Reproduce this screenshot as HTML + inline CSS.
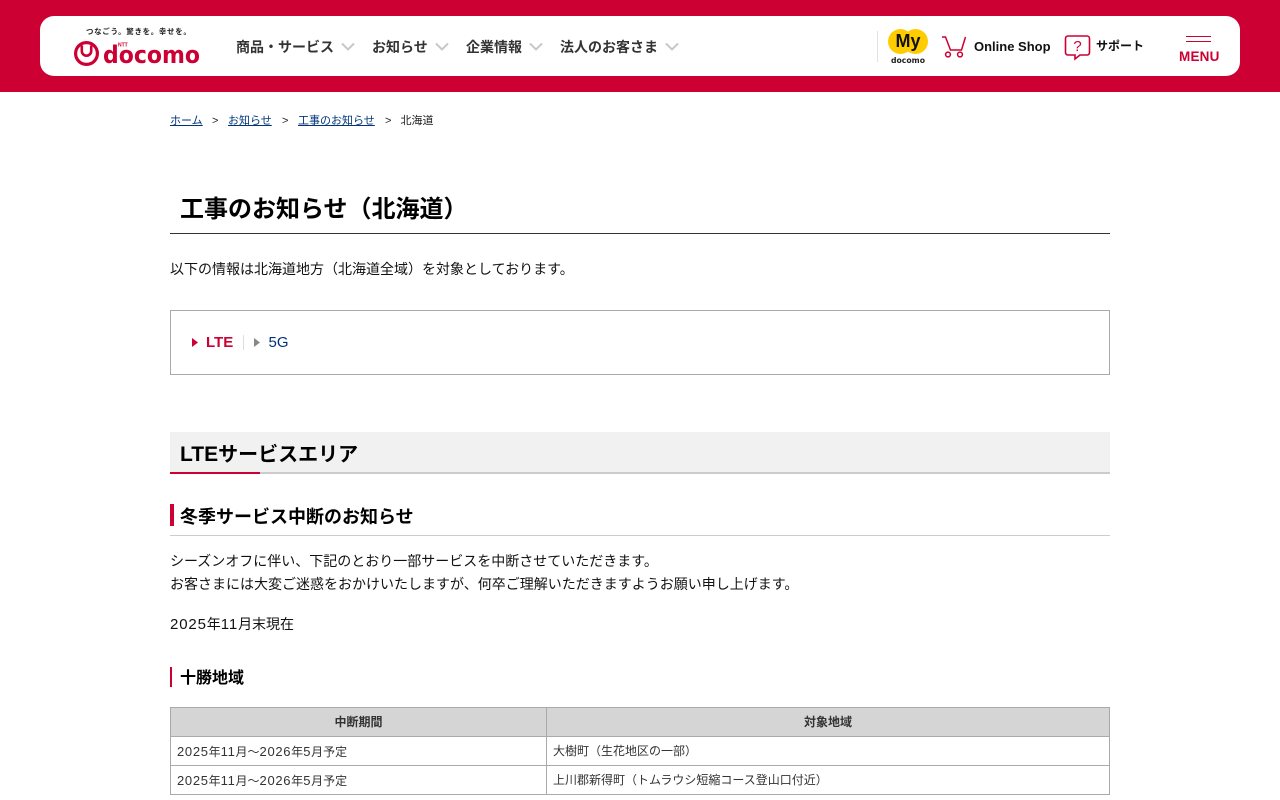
<!DOCTYPE html>
<html lang="ja">
<head>
<meta charset="utf-8">
<title>工事のお知らせ（北海道）</title>
<style>
html,body{margin:0;padding:0;background:#fff;}
body{width:1280px;height:800px;overflow:hidden;position:relative;font-family:"Liberation Sans","Noto Sans CJK JP",sans-serif;color:#000;}
.a{position:absolute;white-space:nowrap;}
a{color:#003478;}
.nav{font-size:14px;font-weight:700;color:#333;line-height:20px;top:37px;}
.bc{font-size:11px;line-height:16px;top:113px;color:#222;}
.t{font-size:14px;line-height:23px;color:#111;}
.cell{position:absolute;box-sizing:border-box;border:1px solid #aaa;font-size:12px;color:#333;line-height:29px;padding-left:6px;white-space:nowrap;}
.th{background:#d5d5d5;font-weight:700;text-align:center;padding:0;}
.n14{font-size:15px;letter-spacing:.85px;}
.n12{font-size:13px;letter-spacing:.68px;}
</style>
</head>
<body>
<div class="a" style="left:0;top:0;width:1280px;height:92px;background:#cc0033;"></div>
<div class="a" style="left:40px;top:16px;width:1200px;height:60px;background:#fff;border-radius:14px;"></div>

<div class="a" style="left:86px;top:26px;font-size:7.500px;line-height:12px;font-weight:700;color:#222;letter-spacing:.65px;">つなごう。驚きを。幸せを。</div>
<svg class="a" style="left:70px;top:36px;" width="135" height="34" viewBox="0 0 135 34">
<circle cx="16.500" cy="17.500" r="10.900" fill="none" stroke="#cc0033" stroke-width="3.200"/>
<path d="M11.800 9.500v5.500a4.700 4.700 0 0 0 9.400 0v-5.500" fill="none" stroke="#cc0033" stroke-width="2.600"/>
<text x="33" y="27" font-family="DejaVu Sans" font-size="24" font-weight="700" fill="#cc0033" textLength="97" lengthAdjust="spacingAndGlyphs">docomo</text>
<text x="48" y="10.500" font-family="Liberation Sans" font-size="5" font-weight="700" fill="#cc0033">NTT</text>
</svg>

<div class="a nav" style="left:236px;">商品・サービス</div>
<div class="a nav" style="left:372px;">お知らせ</div>
<div class="a nav" style="left:466px;">企業情報</div>
<div class="a nav" style="left:560px;">法人のお客さま</div>
<svg class="a" style="left:340px;top:42px;" width="16" height="10"><path d="M2 1.500l6 6 6-6" fill="none" stroke="#c8c8c8" stroke-width="2"/></svg>
<svg class="a" style="left:434px;top:42px;" width="16" height="10"><path d="M2 1.500l6 6 6-6" fill="none" stroke="#c8c8c8" stroke-width="2"/></svg>
<svg class="a" style="left:528px;top:42px;" width="16" height="10"><path d="M2 1.500l6 6 6-6" fill="none" stroke="#c8c8c8" stroke-width="2"/></svg>
<svg class="a" style="left:664px;top:42px;" width="16" height="10"><path d="M2 1.500l6 6 6-6" fill="none" stroke="#c8c8c8" stroke-width="2"/></svg>

<div class="a" style="left:877px;top:31px;width:1px;height:31px;background:#e2e2e2;"></div>
<svg class="a" style="left:886px;top:26px;" width="44" height="40" viewBox="0 0 44 40">
<circle cx="14.500" cy="15.500" r="12.500" fill="#ffcc00"/>
<circle cx="29.500" cy="15.500" r="12.500" fill="#ffcc00"/>
<text x="22" y="21" text-anchor="middle" font-family="Liberation Sans" font-size="18" font-weight="700" fill="#111">My</text>
<text x="22" y="37" text-anchor="middle" font-family="DejaVu Sans" font-size="7.500" font-weight="700" fill="#222" textLength="34" lengthAdjust="spacingAndGlyphs">docomo</text>
</svg>
<svg class="a" style="left:940px;top:34px;" width="28" height="26" viewBox="0 0 28 26">
<path d="M2 3h3.500l5 13h11l4-13" fill="none" stroke="#cc0033" stroke-width="1.500"/>
<circle cx="8" cy="20.500" r="2.400" fill="none" stroke="#cc0033" stroke-width="1.500"/>
<circle cx="20" cy="20.500" r="2.400" fill="none" stroke="#cc0033" stroke-width="1.500"/>
</svg>
<div class="a" style="left:974px;top:38px;font-size:13px;font-weight:700;line-height:18px;color:#111;">Online Shop</div>
<svg class="a" style="left:1064px;top:34px;" width="28" height="27" viewBox="0 0 28 27">
<path d="M4 2h19a2.500 2.500 0 0 1 2.500 2.500v14a2.500 2.500 0 0 1-2.500 2.500h-7l-5 4v-4H4a2.500 2.500 0 0 1-2.500-2.500v-14A2.500 2.500 0 0 1 4 2z" fill="none" stroke="#cc0033" stroke-width="1.600"/>
<text x="13.500" y="17" text-anchor="middle" font-family="Liberation Sans" font-size="15" fill="#cc0033">?</text>
</svg>
<div class="a" style="left:1096px;top:37px;font-size:12px;font-weight:700;line-height:18px;color:#111;">サポート</div>
<div class="a" style="left:1186px;top:36px;width:25px;height:1px;background:#cc0033;"></div>
<div class="a" style="left:1186px;top:41px;width:25px;height:1px;background:#cc0033;"></div>
<div class="a" style="left:1179px;top:48px;font-size:13.500px;font-weight:700;line-height:17px;color:#cc0033;letter-spacing:.2px;">MENU</div>

<div class="a bc" style="left:170px;"><a href="#">ホーム</a></div>
<div class="a bc" style="left:212px;">&gt;</div>
<div class="a bc" style="left:228px;"><a href="#">お知らせ</a></div>
<div class="a bc" style="left:282px;">&gt;</div>
<div class="a bc" style="left:298px;"><a href="#">工事のお知らせ</a></div>
<div class="a bc" style="left:385px;">&gt;</div>
<div class="a bc" style="left:400.500px;">北海道</div>

<div class="a" style="left:180px;top:192px;font-size:24px;font-weight:700;line-height:35px;">工事のお知らせ（北海道）</div>
<div class="a" style="left:170px;top:233px;width:940px;height:1px;background:#333;"></div>
<div class="a t" style="left:170px;top:258px;">以下の情報は北海道地方（北海道全域）を対象としております。</div>

<div class="a" style="left:170px;top:310px;width:938px;height:63px;border:1px solid #aaa;"></div>
<svg class="a" style="left:192px;top:338px;" width="7" height="9"><path d="M0 0l6 4.500-6 4.500z" fill="#cc0033"/></svg>
<div class="a" style="left:206px;top:333px;font-size:15px;font-weight:700;line-height:20px;color:#cc0033;">LTE</div>
<div class="a" style="left:243px;top:335px;width:1px;height:15px;background:#ddd;"></div>
<svg class="a" style="left:254px;top:338px;" width="7" height="10"><path d="M0 0l6 4.500-6 4.500z" fill="#888"/></svg>
<div class="a" style="left:268.500px;top:333px;font-size:15px;line-height:20px;color:#003478;">5G</div>

<div class="a" style="left:170px;top:432px;width:940px;height:40px;background:#f1f1f1;"></div>
<div class="a" style="left:170px;top:472px;width:940px;height:2px;background:#ccc;"></div>
<div class="a" style="left:170px;top:472px;width:90px;height:2px;background:#cc0033;"></div>
<div class="a" style="left:180px;top:440px;font-size:20px;font-weight:700;line-height:30px;"><span style="font-size:21px;">LTE</span>サービスエリア</div>

<div class="a" style="left:170px;top:504px;width:4px;height:22px;background:#cc0033;"></div>
<div class="a" style="left:180px;top:504px;font-size:18px;font-weight:700;line-height:27px;">冬季サービス中断のお知らせ</div>
<div class="a" style="left:170px;top:535px;width:940px;height:1px;background:#ccc;"></div>
<div class="a t" style="left:170px;top:550px;">シーズンオフに伴い、下記のとおり一部サービスを中断させていただきます。<br>お客さまには大変ご迷惑をおかけいたしますが、何卒ご理解いただきますようお願い申し上げます。</div>
<div class="a t" style="left:170px;top:613px;"><span class="n14">2025</span>年<span class="n14">11</span>月末現在</div>

<div class="a" style="left:170px;top:667px;width:2px;height:20px;background:#cc0033;"></div>
<div class="a" style="left:180px;top:667px;font-size:16px;font-weight:700;line-height:24px;">十勝地域</div>

<div class="cell th" style="left:170px;top:707px;width:377px;height:30px;line-height:29px;">中断期間</div>
<div class="cell th" style="left:546px;top:707px;width:564px;height:30px;line-height:29px;">対象地域</div>
<div class="cell" style="left:170px;top:736px;width:377px;height:30px;"><span class="n12">2025</span>年<span class="n12">11</span>月～<span class="n12">2026</span>年<span class="n12">5</span>月予定</div>
<div class="cell" style="left:546px;top:736px;width:564px;height:30px;">大樹町（生花地区の一部）</div>
<div class="cell" style="left:170px;top:765px;width:377px;height:30px;"><span class="n12">2025</span>年<span class="n12">11</span>月～<span class="n12">2026</span>年<span class="n12">5</span>月予定</div>
<div class="cell" style="left:546px;top:765px;width:564px;height:30px;">上川郡新得町（トムラウシ短縮コース登山口付近）</div>
</body>
</html>
